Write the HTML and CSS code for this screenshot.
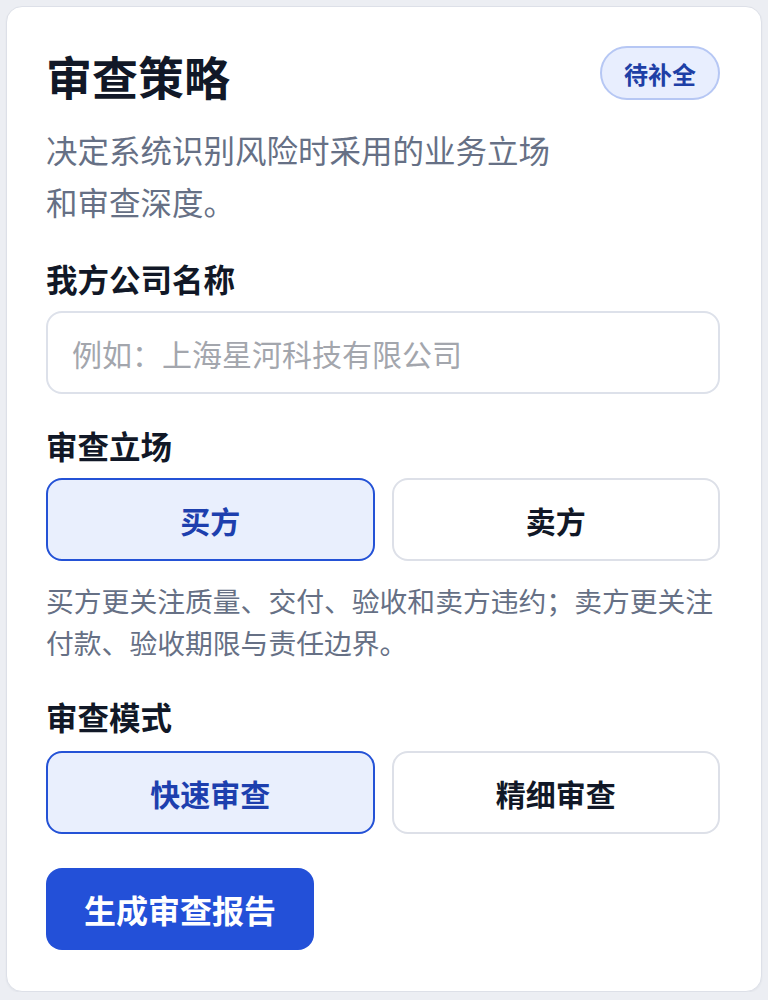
FILE: index.html
```html
<!DOCTYPE html>
<html lang="zh-CN">
<head>
<meta charset="utf-8">
<title>审查策略</title>
<link rel="stylesheet" href="styles.css">
</head>
<body>
<section class="card">
  <header class="head">
    <div class="head-row">
      <h1 class="title">审查策略</h1>
      <span class="badge">待补全</span>
    </div>
    <p class="desc">决定系统识别风险时采用的业务立场和审查深度。</p>
  </header>

  <div class="field">
    <label class="label" for="company">我方公司名称</label>
    <input id="company" class="input" type="text" placeholder="例如：上海星河科技有限公司">
  </div>

  <div class="field">
    <div class="label">审查立场</div>
    <div class="seg">
      <button class="seg-btn active" type="button">买方</button>
      <button class="seg-btn" type="button">卖方</button>
    </div>
    <p class="help">买方更关注质量、交付、验收和卖方违约；卖方更关注付款、验收期限与责任边界。</p>
  </div>

  <div class="field field-mode">
    <div class="label">审查模式</div>
    <div class="seg">
      <button class="seg-btn active" type="button">快速审查</button>
      <button class="seg-btn" type="button">精细审查</button>
    </div>
  </div>

  <div class="actions">
    <button class="primary" type="button">生成审查报告</button>
  </div>
</section>
</body>
</html>
```

FILE: styles.css
```css
* { box-sizing: border-box; }

html, body {
  margin: 0;
  padding: 0;
  background: #eceef3;
}

body {
  padding: 6px 6px 0 6px;
  font-family: "Noto Sans CJK SC", "Noto Sans", sans-serif;
  color: #111827;
}

.card {
  width: 756px;
  background: #ffffff;
  border: 1px solid #dde0e8;
  border-radius: 16px;
  padding: 40px 41px 41px 39px;
  box-shadow: 0 1px 2px rgba(20, 30, 60, 0.05);
}

.head-row {
  display: flex;
  align-items: center;
  justify-content: space-between;
}

.title {
  margin: 0;
  font-size: 46px;
  line-height: 56px;
  font-weight: 700;
  color: #111827;
}

.badge {
  display: inline-flex;
  align-items: center;
  justify-content: center;
  width: 120px;
  height: 54px;
  border-radius: 27px;
  background: #e8eefe;
  border: 2px solid #b6c7f4;
  color: #1e3fa6;
  font-size: 24px;
  font-weight: 700;
  margin-top: -4px;
}

.desc {
  margin: 20px 0 0 0;
  max-width: 525px;
  font-size: 31.5px;
  line-height: 52px;
  color: #667085;
}

.field {
  margin-top: 30px;
}

.field-mode {
  margin-top: 32px;
}

.label {
  display: block;
  font-size: 31.5px;
  line-height: 42px;
  font-weight: 700;
  color: #111827;
  margin-bottom: 12px;
}

.field-mode .label {
  margin-bottom: 14px;
}

.input {
  display: block;
  width: 100%;
  height: 83px;
  border: 2px solid #dde1ea;
  border-radius: 16px;
  padding: 0 24px;
  font-family: inherit;
  font-size: 30px;
  color: #111827;
  background: #fff;
  outline: none;
}

.input::placeholder {
  color: #a3a6ad;
}

.seg {
  display: grid;
  grid-template-columns: 1fr 1fr;
  gap: 17px;
}

.seg-btn {
  height: 83px;
  border: 2px solid #dde0e8;
  border-radius: 16px;
  background: #ffffff;
  font-family: inherit;
  font-size: 30px;
  font-weight: 700;
  color: #111827;
  padding: 0;
}

.seg-btn.active {
  background: #e9effd;
  border-color: #2452d6;
  color: #1d3fae;
}

.help {
  margin: 18px 0 0 0;
  font-size: 27.8px;
  line-height: 42px;
  color: #667085;
}

.actions {
  margin-top: 34px;
}

.primary {
  height: 82px;
  padding: 0 38px;
  border: none;
  border-radius: 16px;
  background: #2350d8;
  color: #ffffff;
  font-family: inherit;
  font-size: 32px;
  font-weight: 700;
}
```
